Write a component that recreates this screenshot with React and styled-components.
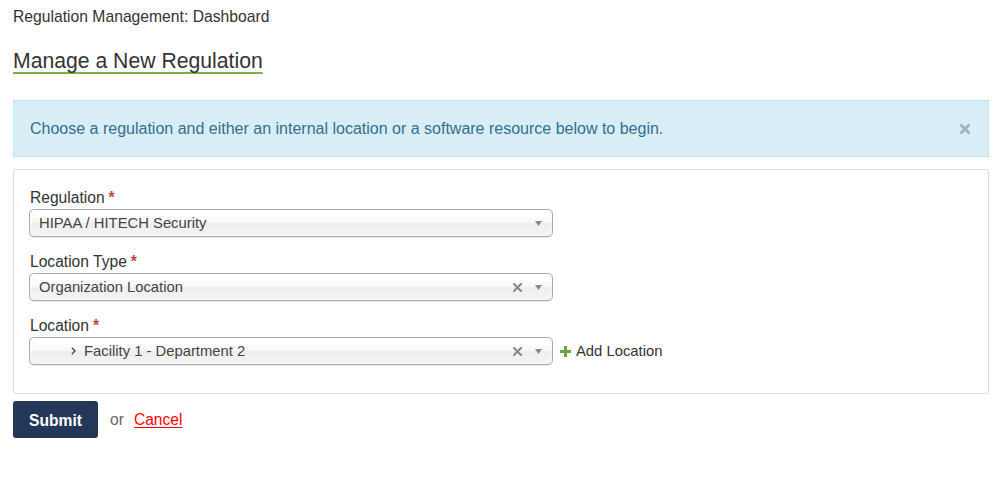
import React from "react";
import styled, { createGlobalStyle } from "styled-components";

const Global = createGlobalStyle`
  html, body { margin: 0; padding: 0; background: #fff; }
  body { font-family: "Liberation Sans", Arial, sans-serif; color: #333; }
  * { box-sizing: border-box; }
`;

const Page = styled.div`
  padding: 7px 18px 0 13px;
  display: flex;
  flex-direction: column;
`;

const Breadcrumb = styled.div`
  font-size: 15.7px;
  line-height: 20px;
  color: #333;
`;

const Title = styled.h1`
  margin: 20px 0 0;
  font-size: 21.2px;
  font-weight: normal;
  line-height: 28px;
  color: #333;
  span {
    text-decoration: underline;
    text-decoration-color: #7bb04a;
    text-decoration-thickness: 2px;
    text-underline-offset: 4px;
  }
`;

const Alert = styled.div`
  margin-top: 25px;
  display: flex;
  align-items: center;
  justify-content: space-between;
  background: #d9edf7;
  border: 1px solid #bce8f1;
  color: #31708f;
  padding: 15px 16px 15px 16px;
  font-size: 16px;
  line-height: 25px;
`;

const Close = styled.button`
  border: 0;
  background: none;
  padding: 0;
  margin-right: 0;
  width: 14px;
  height: 14px;
  display: flex;
  align-items: center;
  justify-content: center;
  cursor: pointer;
`;

const Panel = styled.div`
  margin-top: 12px;
  border: 1px solid #dcdcdc;
  border-radius: 3px;
  padding: 17px 15px 28px;
  display: flex;
  flex-direction: column;
  gap: 14px;
`;

const Group = styled.div`
  display: flex;
  flex-direction: column;
`;

const Label = styled.label`
  font-size: 15.6px;
  line-height: 22px;
  color: #333;
  padding-left: 1px;
`;

const Req = styled.span`
  color: #b94a48;
  margin-left: 4px;
  font-weight: bold;
`;

const Row = styled.div`
  display: flex;
  align-items: center;
  gap: 8px;
`;

const Select = styled.div`
  width: 524px;
  height: 28px;
  border: 1px solid #aaa;
  border-radius: 5px;
  background: linear-gradient(#fff 20%, #f6f6f6 50%, #eee 52%, #f4f4f4 100%);
  box-shadow: 0 0 3px #fff inset, 0 1px 1px rgba(0, 0, 0, 0.1);
  display: flex;
  align-items: center;
  padding: 0 10px 0 9px;
  font-size: 14.8px;
  color: #444;
`;

const Value = styled.span`
  flex: 1;
  display: flex;
  align-items: center;
  padding-left: ${(p) => p.$indent || 0}px;
`;

const Chevron = styled.svg`
  margin-right: 8px;
`;

const ClearX = styled.svg`
  margin-right: 13px;
`;

const AddLink = styled.a`
  display: flex;
  align-items: center;
  gap: 5px;
  font-size: 14.8px;
  color: #333;
  text-decoration: none;
  margin-left: -1px;
`;

const Actions = styled.div`
  margin-top: 7px;
  display: flex;
  align-items: center;
`;

const Submit = styled.button`
  background: #243759;
  color: #fff;
  border: 0;
  border-radius: 3px;
  height: 37px;
  width: 85px;
  font-family: "Liberation Sans", Arial, sans-serif;
  font-weight: bold;
  font-size: 15.6px;
  padding: 0;
  padding-top: 3px;
`;

const Or = styled.span`
  color: #666;
  font-size: 15.6px;
  margin-left: 12px;
`;

const Cancel = styled.a`
  color: #f00;
  font-size: 15.6px;
  margin-left: 10px;
  text-decoration: underline;
  text-underline-offset: 2px;
`;

const Arrow = () => (
  <svg width="7" height="5" viewBox="0 0 7 5">
    <path d="M0 0 H7 L3.5 5 Z" fill="#888" />
  </svg>
);

const Clear = () => (
  <ClearX width="9" height="9" viewBox="0 0 9 9">
    <path d="M1 1 L8 8 M8 1 L1 8" stroke="#8a8a8a" strokeWidth="2.2" strokeLinecap="square" />
  </ClearX>
);

const Field = ({ label, children, clear, extra }) => (
  <Group>
    <Label>
      {label}
      <Req>*</Req>
    </Label>
    <Row>
      <Select>
        {children}
        {clear && <Clear />}
        <Arrow />
      </Select>
      {extra}
    </Row>
  </Group>
);

export default function App() {
  return (
    <>
      <Global />
      <Page>
        <Breadcrumb>Regulation Management: Dashboard</Breadcrumb>
        <Title>
          <span>Manage a New Regulation</span>
        </Title>
        <Alert>
          <span>
            Choose a regulation and either an internal location or a software resource below to begin.
          </span>
          <Close aria-label="close">
            <svg width="12" height="12" viewBox="0 0 12 12">
              <path d="M1.5 1.5 L10.5 10.5 M10.5 1.5 L1.5 10.5" stroke="#9fb0b8" strokeWidth="2.6" />
            </svg>
          </Close>
        </Alert>
        <Panel>
          <Field label="Regulation">
            <Value>HIPAA / HITECH Security</Value>
          </Field>
          <Field label="Location Type" clear>
            <Value>Organization Location</Value>
          </Field>
          <Field
            label="Location"
            clear
            extra={
              <AddLink href="#">
                <svg width="11" height="11" viewBox="0 0 11 11">
                  <path d="M5.5 0 V11 M0 5.5 H11" stroke="#6aa342" strokeWidth="3" />
                </svg>
                Add Location
              </AddLink>
            }
          >
            <Value $indent={32}>
              <Chevron width="5" height="8" viewBox="0 0 5 8">
                <path d="M0.8 0.8 L4 4 L0.8 7.2" stroke="#444" strokeWidth="1.3" fill="none" />
              </Chevron>
              Facility 1 - Department 2
            </Value>
          </Field>
        </Panel>
        <Actions>
          <Submit>Submit</Submit>
          <Or>or</Or>
          <Cancel href="#">Cancel</Cancel>
        </Actions>
      </Page>
    </>
  );
}
